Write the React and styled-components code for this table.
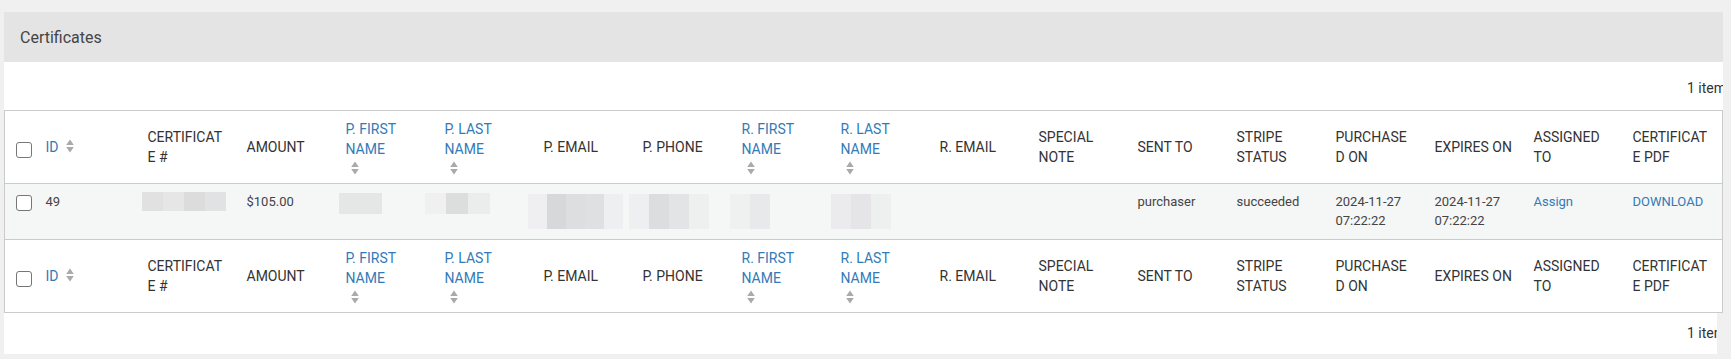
import React from "react";
import styled, { createGlobalStyle } from "styled-components";

const GlobalStyle = createGlobalStyle`
  body {
    margin: 0;
    background: #f0f0f0;
    font-family: Roboto, "Liberation Sans", Arial, sans-serif;
  }
`;

const Page = styled.div`
  padding: 12px 8px 7px 4px;
`;

const Panel = styled.section`
  display: flex;
  flex-direction: column;
`;

const PanelHeading = styled.div`
  height: 50px;
  display: flex;
  align-items: center;
  padding-left: 16px;
  background: #e4e4e4;
  color: #444;
  font-size: 16px;
`;

const PanelBody = styled.div`
  background: #fff;
  padding-top: 16px;
  overflow: hidden;
`;

const PanelFooter = styled.div`
  background: #fff;
  margin-right: 6px;
  padding: 10px 0 11px;
  overflow: hidden;
`;

const Pager = styled.div`
  display: flex;
  justify-content: flex-end;
  margin-right: ${(p) => p.$bleed}px;
  margin-bottom: ${(p) => p.$gap || 0}px;
  font-size: 14px;
  line-height: 20px;
  color: #333;
  white-space: nowrap;
`;

const Table = styled.table`
  width: 100%;
  table-layout: fixed;
  border-collapse: collapse;
  border: 1px solid #cbcbcb;
`;

const Col = styled.col`
  width: ${(p) => (p.$w ? `${p.$w}px` : "auto")};
`;

const HeadRow = styled.tr`
  background: #fff;
  border-top: 1px solid #cbcbcb;
`;

const Th = styled.th`
  height: 60px;
  padding: 6px 11px 6px 9px;
  font-weight: 400;
  font-size: 14px;
  line-height: 20px;
  text-align: left;
  vertical-align: middle;
  color: ${(p) => (p.$link ? "#337ab7" : "#333")};
  overflow-wrap: anywhere;
`;

const CheckTh = styled.th`
  padding: 0 0 0 11px;
  vertical-align: middle;
`;

const DataRow = styled.tr`
  background: #f5f6f6;
  border-top: 1px solid #cbcbcb;
`;

const Td = styled.td`
  padding: 9px 11px 9px 9px;
  font-size: 13px;
  line-height: 18.57px;
  vertical-align: top;
  color: #444;
  white-space: normal;
`;

const CheckTd = styled.td`
  padding: 9px 0 0 11px;
  vertical-align: top;
`;

const Check = styled.input.attrs({ type: "checkbox" })`
  appearance: none;
  display: block;
  width: 16px;
  height: 16px;
  margin: ${(p) => (p.$head ? "5px 0 0" : "2px 0 0")};
  border: 1px solid #767676;
  border-radius: 3px;
  background: #fff;
`;

const SortWrap = styled.span`
  display: ${(p) => (p.$block ? "block" : "inline-block")};
  box-sizing: border-box;
  height: ${(p) => (p.$block ? "16px" : "auto")};
  padding-top: ${(p) => (p.$block ? "2px" : "0")};
  margin-left: ${(p) => (p.$block ? "5px" : "4px")};
  vertical-align: -1px;
  line-height: 0;
`;

const Link = styled.a`
  color: #337ab7;
  text-decoration: none;
`;

const Blur = styled.div`
  display: flex;
  margin-left: ${(p) => p.$dx}px;
  margin-top: ${(p) => p.$dy || 0}px;
  height: ${(p) => p.$h}px;
`;

const Tile = styled.span`
  width: ${(p) => p.$w}px;
  background: ${(p) => p.$c};
`;

const SortIcon = ({ block }) => (
  <SortWrap $block={block}>
    <svg width="8" height="14" viewBox="0 0 8 14">
      <path d="M4 0.5L7.8 6H0.2Z M0.2 8H7.8L4 13.5Z" fill="#aaa" />
    </svg>
  </SortWrap>
);

const columns = [
  { label: "ID", sort: "inline", w: 102 },
  { label: "CERTIFICATE #" },
  { label: "AMOUNT" },
  { label: "P. FIRST NAME", sort: "block" },
  { label: "P. LAST NAME", sort: "block" },
  { label: "P. EMAIL" },
  { label: "P. PHONE" },
  { label: "R. FIRST NAME", sort: "block" },
  { label: "R. LAST NAME", sort: "block" },
  { label: "R. EMAIL" },
  { label: "SPECIAL NOTE" },
  { label: "SENT TO" },
  { label: "STRIPE STATUS" },
  { label: "PURCHASED ON" },
  { label: "EXPIRES ON" },
  { label: "ASSIGNED TO" },
  { label: "CERTIFICATE PDF", w: null },
];

// redacted values, drawn as pixel tiles like the blurred screenshot
const redact = (dx, h, w, colors, dy) => (
  <Blur $dx={dx} $h={h} $dy={dy}>
    {colors.map((c, i) => (
      <Tile key={i} $w={w} $c={c} />
    ))}
  </Blur>
);

const row = [
  "49",
  redact(-6, 19, 21, ["#e1e1e2", "#e6e6e7", "#dcdcdd", "#e1e2e3"], -1),
  "$105.00",
  redact(-7, 21, 21.5, ["#e5e6e6", "#e5e6e6"]),
  redact(-20, 21, 21.7, ["#f0f0f0", "#dcdddd", "#ececed"]),
  redact(-16, 35, 20.2, ["#efeff1", "#d7d8da", "#dddee0", "#dfe0e2", "#eeeff0"], 1),
  redact(-14, 35, 20.2, ["#eeeff0", "#dcdddf", "#e3e4e6", "#eef0ef"], 1),
  redact(-12, 35, 20, ["#eff0f0", "#e8e9eb"], 1),
  redact(-10, 35, 20, ["#ebebed", "#e5e5e8", "#eef0ef"], 1),
  "",
  "",
  "purchaser",
  "succeeded",
  "2024-11-27 07:22:22",
  "2024-11-27 07:22:22",
  <Link>Assign</Link>,
  <Link>DOWNLOAD</Link>,
];

const HeaderCells = () => (
  <HeadRow>
    <CheckTh>
      <Check $head />
    </CheckTh>
    {columns.map((c) => (
      <Th key={c.label} $link={!!c.sort}>
        {c.label}
        {c.sort === "inline" && " "}
        {c.sort && <SortIcon block={c.sort === "block"} />}
      </Th>
    ))}
  </HeadRow>
);

export default function App() {
  return (
    <>
      <GlobalStyle />
      <Page>
        <Panel>
          <PanelHeading>Certificates</PanelHeading>
          <PanelBody>
            <Pager $bleed={-3} $gap={12}>
              1 item
            </Pager>
            <Table>
              <colgroup>
                <Col $w={32} />
                {columns.map((c) => (
                  <Col key={c.label} $w={c.w === undefined ? 99 : c.w} />
                ))}
              </colgroup>
              <thead>
                <HeaderCells />
              </thead>
              <tbody>
                <DataRow>
                  <CheckTd>
                    <Check />
                  </CheckTd>
                  {row.map((v, i) => (
                    <Td key={i}>{v}</Td>
                  ))}
                </DataRow>
              </tbody>
              <tfoot>
                <HeaderCells />
              </tfoot>
            </Table>
          </PanelBody>
          <PanelFooter>
            <Pager $bleed={-9}>1 item</Pager>
          </PanelFooter>
        </Panel>
      </Page>
    </>
  );
}
